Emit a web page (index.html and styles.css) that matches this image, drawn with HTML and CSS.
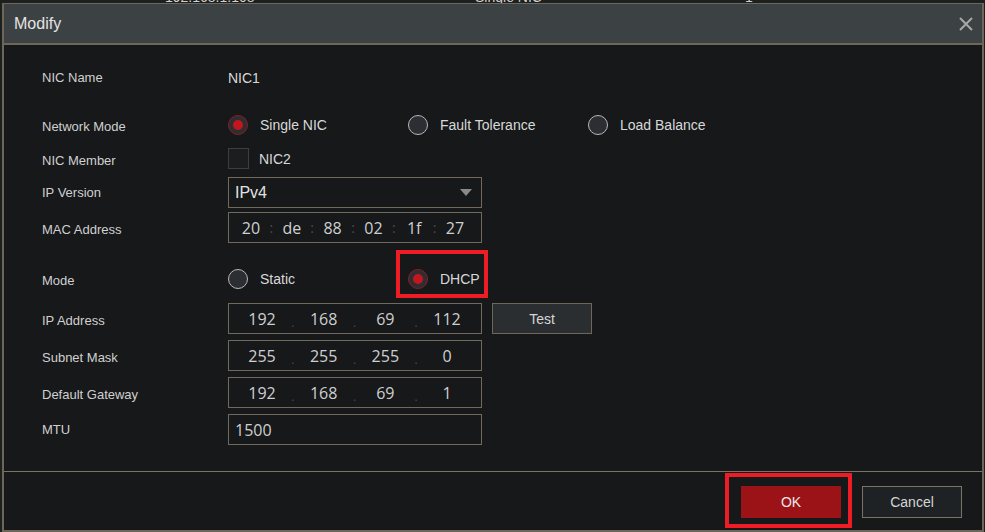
FILE: index.html
```html
<!DOCTYPE html>
<html lang="en">
<head>
  <meta charset="UTF-8" />
  <title>Modify</title>
  <link rel="stylesheet" href="styles.css">
</head>
<body>

<div class="backdrop">
  <span class="bd-ip">192.168.1.108</span>
  <span class="bd-mode">Single NIC</span>
  <span class="bd-num">1</span>
</div>

<div class="dialog">
  <div class="dialog-head">
    <span class="title">Modify</span>
    <svg class="close" width="14" height="14" viewBox="0 0 14 14">
      <path d="M1 1 L13 13 M13 1 L1 13" stroke="#a8a8a8" stroke-width="2" fill="none"/>
    </svg>
  </div>

  <div class="dialog-body">
    <div class="row">
      <label>NIC Name</label>
      <div class="value">NIC1</div>
    </div>

    <div class="row gap-lg">
      <label class="low">Network Mode</label>
      <div class="options">
        <div class="option"><span class="radio on"></span>Single NIC</div>
        <div class="option"><span class="radio"></span>Fault Tolerance</div>
        <div class="option"><span class="radio"></span>Load Balance</div>
      </div>
    </div>

    <div class="row tight">
      <label class="low">NIC Member</label>
      <div class="options">
        <div class="option"><span class="check"></span>NIC2</div>
      </div>
    </div>

    <div class="row tight">
      <label>IP Version</label>
      <div class="field select">IPv4<span class="caret"></span></div>
    </div>

    <div class="row mac-row">
      <label class="low">MAC Address</label>
      <div class="field mac">
        <span class="seg">20</span><span class="sep">:</span>
        <span class="seg">de</span><span class="sep">:</span>
        <span class="seg">88</span><span class="sep">:</span>
        <span class="seg">02</span><span class="sep">:</span>
        <span class="seg">1f</span><span class="sep">:</span>
        <span class="seg">27</span>
      </div>
    </div>

    <div class="row gap-mode">
      <label class="low">Mode</label>
      <div class="options">
        <div class="option"><span class="radio"></span>Static</div>
        <div class="option">
          <span class="radio on"></span>DHCP
          <span class="mark mark-dhcp"></span>
        </div>
      </div>
    </div>

    <div class="row gap-ip">
      <label class="low">IP Address</label>
      <div class="field ip">
        <span class="seg">192</span><span class="dot">.</span>
        <span class="seg">168</span><span class="dot">.</span>
        <span class="seg">69</span><span class="dot">.</span>
        <span class="seg">112</span>
      </div>
      <button class="btn test">Test</button>
    </div>

    <div class="row">
      <label class="low">Subnet Mask</label>
      <div class="field ip">
        <span class="seg">255</span><span class="dot">.</span>
        <span class="seg">255</span><span class="dot">.</span>
        <span class="seg">255</span><span class="dot">.</span>
        <span class="seg">0</span>
      </div>
    </div>

    <div class="row">
      <label class="low">Default Gateway</label>
      <div class="field ip">
        <span class="seg">192</span><span class="dot">.</span>
        <span class="seg">168</span><span class="dot">.</span>
        <span class="seg">69</span><span class="dot">.</span>
        <span class="seg">1</span>
      </div>
    </div>

    <div class="row">
      <label>MTU</label>
      <div class="field plain">1500</div>
    </div>
  </div>

  <div class="dialog-foot">
    <div class="ok-wrap">
      <button class="btn ok">OK</button>
      <span class="mark mark-ok"></span>
    </div>
    <button class="btn cancel">Cancel</button>
  </div>
</div>

</body>
</html>
```

FILE: styles.css
```css
body {
  margin: 0;
  padding: 0;
  background: #1d2021;
  font-family: "Liberation Sans", Arial, sans-serif;
  color: #d2d2d2;
  width: 985px;
  height: 532px;
  overflow: hidden;
}

/* list behind the dialog, only its last pixels show */
.backdrop { position: relative; height: 3px; overflow: hidden; font-size: 14px; color: #cfcfcf; }
.backdrop span { position: absolute; bottom: -1px; line-height: 14px; }
.bd-ip { left: 165px; }
.bd-mode { left: 475px; }
.bd-num { left: 745px; }

.dialog {
  margin-left: 2px;
  width: 978px;
  height: 526px;
  border: 2px solid #6e6758;
  border-top-width: 1px;
  background: #16181a;
  display: flex;
  flex-direction: column;
}

.dialog-head {
  height: 39px;
  background: #3c4144;
  border-bottom: 2px solid #6e6758;
  display: flex;
  align-items: center;
  justify-content: space-between;
  padding: 0 9px 0 10px;
}
.title { font-size: 16px; color: #e4e4e4; }
.close { display: block; margin-top: 1px; }

.dialog-body { padding: 17px 0 25px 38px; flex: 1; }

.row { display: flex; align-items: center; height: 31px; margin-top: 6px; position: relative; }
.row:first-child { margin-top: 0; }
.row.gap-lg { margin-top: 16px; }
.row.tight { margin-top: 3px; }
.row.mac-row { margin-top: 4px; }
.row.gap-mode { margin-top: 20px; }
.row.gap-ip { margin-top: 9px; }

.row label { width: 186px; font-size: 13px; color: #d0d0d0; }
.row label.low { padding-top: 4px; }
.value { font-size: 14px; color: #d8d8d8; }

.options { display: flex; }
.option { width: 180px; display: flex; align-items: center; font-size: 14px; color: #d8d8d8; position: relative; }

.radio {
  width: 18px; height: 18px;
  border: 1px solid #b8b8b8;
  border-radius: 50%;
  background: #2b2e33;
  margin-right: 12px;
  box-sizing: content-box;
  position: relative;
}
.radio.on { border-color: #8e1c20; background: #2b2e33; }
.radio.on::after {
  content: "";
  position: absolute;
  left: 4px; top: 4px;
  width: 10px; height: 10px;
  border-radius: 50%;
  background: #c6161d;
}

.check {
  width: 19px; height: 19px;
  border: 1px solid #3e3e3e;
  background: #1c1d1f;
  margin-right: 10px;
}

.field {
  width: 252px;
  height: 29px;
  border: 1px solid #716a5c;
  display: flex;
  align-items: center;
  font-family: "Open Sans", "Liberation Sans", sans-serif;
  font-size: 16px;
  color: #cfcfcf;
  box-sizing: content-box;
}
.field.select, .field.plain { padding-left: 6px; width: 246px; font-family: "Liberation Sans", Arial, sans-serif; }
.field.plain { font-family: "Open Sans", sans-serif; }
.field.select { justify-content: space-between; font-size: 16px; color: #e2e2e2; }
.caret {
  width: 0; height: 0;
  border-left: 6px solid transparent;
  border-right: 6px solid transparent;
  border-top: 7px solid #8a8a8a;
  margin-right: 9px;
}

.mac { padding: 0 11px 0 7px; width: 234px; }
.mac .seg { width: 30px; text-align: center; }
.mac .sep { flex: 1; text-align: center; color: #4a4a4a; font-size: 14px; }

.ip { padding: 0 14px 0 13px; width: 225px; }
.ip .seg { width: 40px; text-align: center; }
.ip .dot { flex: 1; text-align: center; color: #4a4a4a; font-size: 12px; padding-top: 8px; }

.btn {
  font-family: "Liberation Sans", Arial, sans-serif;
  font-size: 14px;
  color: #d6d6d6;
  width: 100px;
  height: 32px;
  border: 1px solid #6e6758;
  cursor: pointer;
}
.test { margin-left: 10px; background: #2a2e31; height: 31px; }

.dialog-foot {
  height: 59px;
  border-top: 1px solid #7a7366;
  display: flex;
  justify-content: flex-end;
  align-items: flex-start;
  padding: 14px 20px 0 0;
  box-sizing: border-box;
}
.ok-wrap { position: relative; margin-right: 21px; }
.ok { background: #9b1316; border-color: #9b1316; color: #e8e8e8; display: block; }
.cancel { background: #1e2224; border-color: #7a7366; }

.mark { position: absolute; border: 4px solid #ee1c25; pointer-events: none; }
.mark-dhcp { left: -12px; top: -19px; width: 84px; height: 40px; }
.mark-ok { left: -16px; top: -13px; width: 119px; height: 47px; }
```
